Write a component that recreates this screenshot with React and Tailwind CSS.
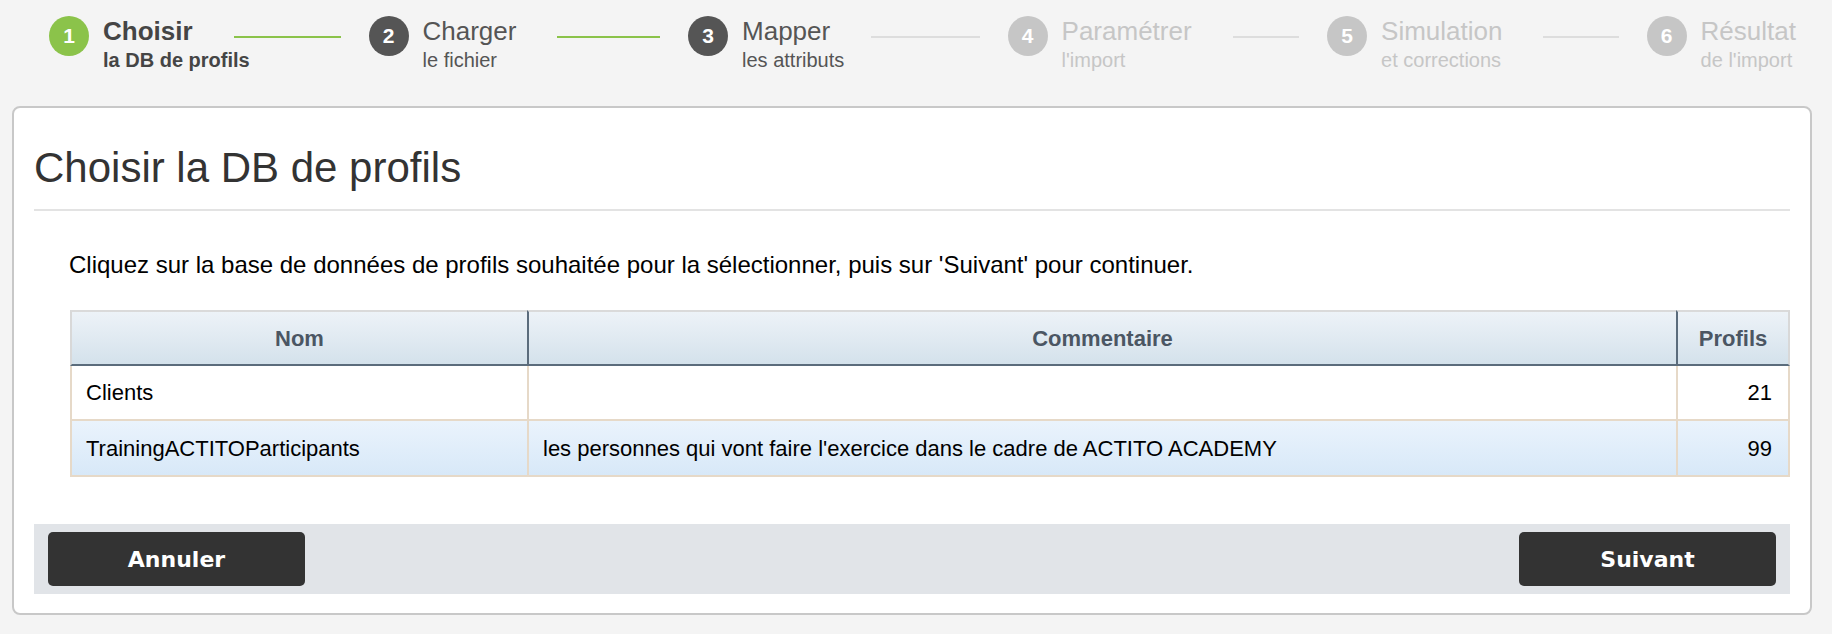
import React from 'react';

const steps = [
  { n: 1, title: 'Choisir', sub: 'la DB de profils', state: 'active' },
  { n: 2, title: 'Charger', sub: 'le fichier', state: 'done' },
  { n: 3, title: 'Mapper', sub: 'les attributs', state: 'done' },
  { n: 4, title: 'Paramétrer', sub: "l'import", state: 'todo' },
  { n: 5, title: 'Simulation', sub: 'et corrections', state: 'todo' },
  { n: 6, title: 'Résultat', sub: "de l'import", state: 'todo' },
];

const circleCls = {
  active: 'bg-[#8bc34a]',
  done: 'bg-[#555555]',
  todo: 'bg-[#c6c6c6]',
};

const textCls = {
  active: 'text-[#454545]',
  done: 'text-[#555555]',
  todo: 'text-[#c6c6c6]',
};

function Step({ step, last, lineGreen }) {
  return (
    <div className={last ? 'flex items-start shrink-0' : 'flex items-start flex-1'}>
      <div className={`mt-4 w-10 h-10 rounded-full flex items-center justify-center text-white font-bold text-[21px] shrink-0 ${circleCls[step.state]}`}>
        {step.n}
      </div>
      <div className={`ml-[14px] mt-[16px] ${textCls[step.state]}`}>
        <div className={`text-[26px] leading-[30px] whitespace-nowrap ${step.state === 'active' ? 'font-bold' : ''}`}>{step.title}</div>
        <div className={`w-0 mt-[1px] whitespace-nowrap text-[20px] leading-[26px] ${step.state === 'active' ? 'font-bold' : ''}`}>{step.sub}</div>
      </div>
      {!last && (
        <div className={`flex-1 h-[2px] mt-[36px] ml-[41px] mr-[28px] ${lineGreen ? 'bg-[#8bc34a]' : 'bg-[#dddddd]'}`} />
      )}
    </div>
  );
}

export default function App() {
  return (
    <div className="min-h-screen bg-[#f4f4f4] pb-[19px]" style={{ fontFamily: '"Liberation Sans", Arial, sans-serif' }}>
      {/* Etapes de l'import */}
      <div className="flex items-start h-[106px] pl-[49px] pr-[36px]">
        {steps.map((s, i) => (
          <Step key={s.n} step={s} last={i === steps.length - 1} lineGreen={i < 2} />
        ))}
      </div>

      <div className="ml-[12px] mr-[20px] bg-white border-2 border-[#c8c8c8] rounded-[8px] px-[20px] pb-[19px]">
        <h1 className="pt-[36px] text-[42px] leading-[48px] text-[#333333]">Choisir la DB de profils</h1>
        <div className="mt-[17px] h-[2px] bg-[#e3e3e3]" />

        <p className="mt-[40px] ml-[35px] text-[24px] leading-[28px] text-black">
          Cliquez sur la base de données de profils souhaitée pour la sélectionner, puis sur 'Suivant' pour continuer.
        </p>

        <div className="mt-[31px] ml-[36px]">
          <table className="w-full table-fixed border-separate border-spacing-0 text-[22px]">
            <colgroup>
              <col className="w-[457px]" />
              <col />
              <col className="w-[114px]" />
            </colgroup>
            <thead>
              <tr className="bg-gradient-to-b from-[#eef3f8] to-[#d3e1eb] text-[#4b5663]">
                <th className="h-[56px] font-bold text-center border-t-2 border-l-2 border-b-2 border-t-[#dadada] border-l-[#d8d8d8] border-b-[#5b6c7c]">Nom</th>
                <th className="h-[56px] font-bold text-center border-t-2 border-l-2 border-b-2 border-t-[#dadada] border-l-[#5b6c7c] border-b-[#5b6c7c]">Commentaire</th>
                <th className="h-[56px] font-bold text-center border-t-2 border-l-2 border-r-2 border-b-2 border-t-[#dadada] border-l-[#5b6c7c] border-r-[#d8d8d8] border-b-[#5b6c7c]">Profils</th>
              </tr>
            </thead>
            <tbody className="text-black">
              <tr className="bg-white">
                <td className="h-[55px] pl-[14px] border-l-2 border-b-2 border-[#e6d9c8]">Clients</td>
                <td className="h-[55px] pl-[14px] border-l-2 border-b-2 border-[#e6d9c8]"></td>
                <td className="h-[55px] pr-[16px] text-right border-l-2 border-r-2 border-b-2 border-[#e6d9c8]">21</td>
              </tr>
              <tr className="bg-gradient-to-b from-[#eaf3fc] to-[#d7e8f8]">
                <td className="h-[56px] pl-[14px] border-l-2 border-b-2 border-[#e6d9c8]">TrainingACTITOParticipants</td>
                <td className="h-[56px] pl-[14px] border-l-2 border-b-2 border-[#e6d9c8]">les personnes qui vont faire l'exercice dans le cadre de ACTITO ACADEMY</td>
                <td className="h-[56px] pr-[16px] text-right border-l-2 border-r-2 border-b-2 border-[#e6d9c8]">99</td>
              </tr>
            </tbody>
          </table>
        </div>

        <div className="mt-[47px] bg-[#e1e4e8] px-[14px] py-[8px] flex justify-between">
          <button className="w-[257px] h-[54px] rounded-[5px] bg-[#333333] text-white font-bold text-[22px]" style={{ fontFamily: '"DejaVu Sans", Verdana, sans-serif' }}>
            Annuler
          </button>
          <button className="w-[257px] h-[54px] rounded-[5px] bg-[#333333] text-white font-bold text-[22px]" style={{ fontFamily: '"DejaVu Sans", Verdana, sans-serif' }}>
            Suivant
          </button>
        </div>
      </div>
    </div>
  );
}
